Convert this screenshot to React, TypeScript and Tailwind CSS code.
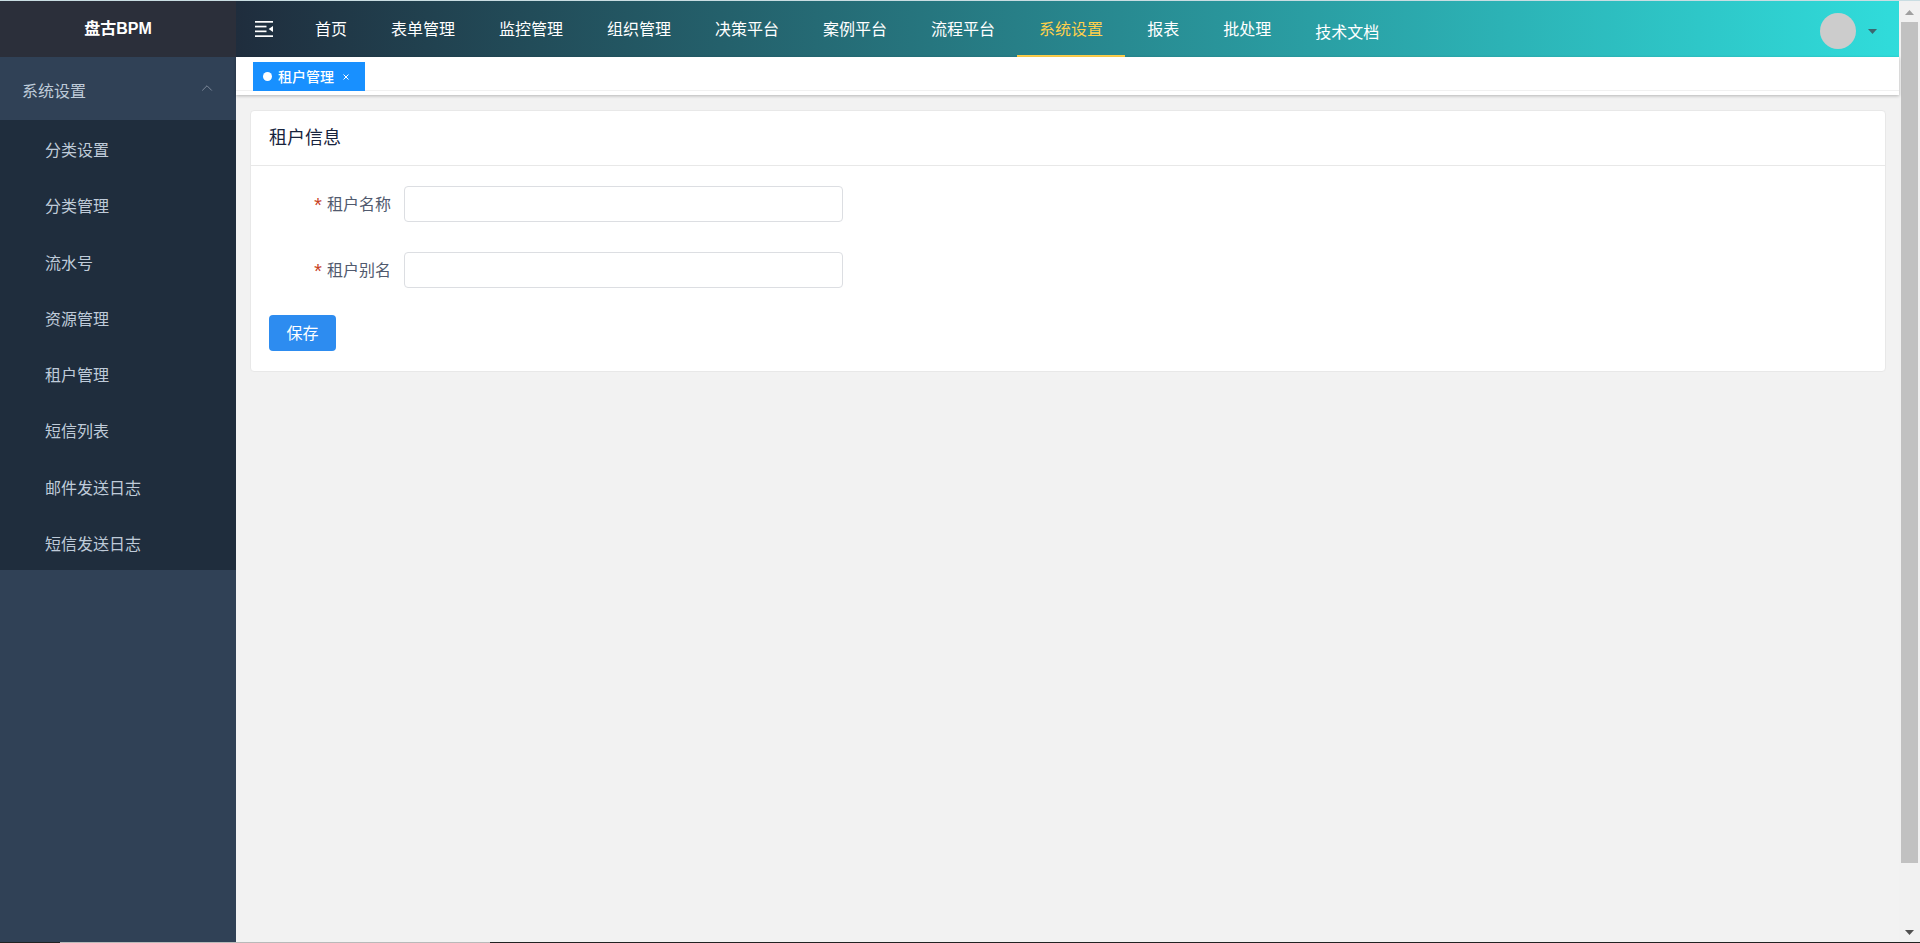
import { useState } from 'react';
import { ChevronUp } from 'lucide-react';

const navItems = ['首页', '表单管理', '监控管理', '组织管理', '决策平台', '案例平台', '流程平台', '系统设置', '报表', '批处理'];

const menuItems = ['分类设置', '分类管理', '流水号', '资源管理', '租户管理', '短信列表', '邮件发送日志', '短信发送日志'];

const fields = [
  { id: 'tenant-name', label: '租户名称' },
  { id: 'tenant-alias', label: '租户别名' },
];

function FoldIcon() {
  return (
    <svg width="18" height="16" viewBox="0 0 18 16" fill="#fff" aria-hidden="true">
      <rect x="0" y="0" width="18" height="1.7" />
      <rect x="0" y="4.7" width="11.5" height="1.7" />
      <rect x="0" y="9.5" width="11.5" height="1.7" />
      <rect x="0" y="14.3" width="18" height="1.7" />
      <path d="M18 5v6l-4.4-3z" />
    </svg>
  );
}

function Sidebar() {
  return (
    <aside className="w-[236px] shrink-0 bg-[#304156] flex flex-col">
      <h1 className="h-14 bg-[#2b2f3a] flex items-center justify-center text-base font-bold text-white">盘古BPM</h1>
      <button className="h-[63px] pl-[22px] pr-5 pt-1.5 flex items-center justify-between text-base text-[#bfcbd9]">
        系统设置
        <ChevronUp size={18} strokeWidth={1.2} className="text-[#8590a0] mb-2" />
      </button>
      <ul className="h-[450px] bg-[#1f2d3d] grid auto-rows-fr">
        {menuItems.map((item) => (
          <li key={item} className="flex">
            <a href="#" className="flex-1 flex items-center pl-[45px] pt-1.5 text-base text-[#bfcbd9]">{item}</a>
          </li>
        ))}
      </ul>
    </aside>
  );
}

function Header() {
  return (
    <header className="h-14 flex items-stretch bg-linear-to-r/srgb from-[#1f2d3d] to-[#30dcdb]">
      <button className="w-[57px] pl-[19px] flex items-center" aria-label="收起菜单">
        <FoldIcon />
      </button>
      <nav className="flex flex-1 text-base">
        {navItems.map((item) => (
          <a
            key={item}
            href="#"
            className={`px-[22px] pt-1 flex items-center border-b-2 ${item === '系统设置' ? 'text-[#ffd04b] border-[#ffd04b]' : 'text-white border-transparent'}`}
          >
            {item}
          </a>
        ))}
        <a href="#" className="px-[22px] pt-2 flex items-center text-white">技术文档</a>
      </nav>
      <button className="flex items-center gap-3 pt-1 pr-[22px]" aria-label="用户菜单">
        <span className="size-9 rounded-full bg-[#ccc]" />
        <svg width="9" height="5" viewBox="0 0 9 5" fill="#3c6770" aria-hidden="true">
          <path d="M0 0h9L4.5 5z" />
        </svg>
      </button>
    </header>
  );
}

function TagsBar() {
  return (
    <div className="relative bg-white pb-1 shadow-[0_1px_3px_rgba(0,0,0,0.25)]">
      <div className="h-[34px] pl-[17px] pt-[5px] border-b border-[#f0f0f0] flex">
        <div className="h-[29px] w-28 pl-[10px] bg-[#1890ff] text-white text-sm font-medium flex items-center">
          <span className="size-[9px] rounded-full bg-white mr-1.5" />
          租户管理
          <button className="ml-[9px]" aria-label="关闭">
            <svg width="6" height="6" viewBox="0 0 6 6" stroke="#fff" strokeWidth="1" aria-hidden="true">
              <path d="M.5 .5l5 5M5.5 .5l-5 5" />
            </svg>
          </button>
        </div>
      </div>
    </div>
  );
}

function TenantCard() {
  const [values, setValues] = useState<Record<string, string>>({});

  return (
    <section className="bg-white border border-[#e8e8e8] rounded">
      <h2 className="h-[55px] px-[18px] flex items-center border-b border-[#e8e8e8] text-lg text-[#17233d]">租户信息</h2>
      <form className="px-[18px] py-5" onSubmit={(e) => e.preventDefault()}>
        {fields.map(({ id, label }) => (
          <div key={id} className="flex items-center mb-[30px] last-of-type:mb-[27px]">
            <label htmlFor={id} className="w-[135px] pr-[13px] pt-0.5 flex items-center justify-end text-base text-[#515a6e]">
              <span className="mr-[3px] pt-1.5 font-['Liberation_Mono'] text-xl leading-5 text-[#c8421f]">*</span>
              {label}
            </label>
            <input
              id={id}
              type="text"
              value={values[id] ?? ''}
              onChange={(e) => setValues({ ...values, [id]: e.target.value })}
              className="w-[439px] h-9 px-2 border border-[#dcdee2] rounded outline-none focus:border-[#57a3f3]"
            />
          </div>
        ))}
        <button type="submit" className="h-9 w-[67px] pt-0.5 rounded bg-[#2d8cf0] text-base text-white">保存</button>
      </form>
    </section>
  );
}

function ScrollRail() {
  return (
    <div className="w-[21px] shrink-0 bg-[#f1f1f1] flex flex-col items-center justify-between pb-[7px]" aria-hidden="true">
      <div className="w-full flex flex-col items-center flex-1">
        <svg className="mt-[9px] mb-[7px] shrink-0" width="9" height="5" viewBox="0 0 9 5" fill="#a0a0a0">
          <path d="M0 5h9L4.5 0z" />
        </svg>
        <div className="w-[17px] h-[90.5%] bg-[#c1c1c1]" />
      </div>
      <svg width="9" height="5" viewBox="0 0 9 5" fill="#505050">
        <path d="M0 0h9L4.5 5z" />
      </svg>
    </div>
  );
}

export default function App() {
  return (
    <div className="min-h-screen flex flex-col bg-[#f2f2f2] border-t border-[#c9dde2] font-['Liberation_Sans','Noto_Sans_CJK_SC',sans-serif]">
      <div className="flex flex-1">
        <Sidebar />
        <div className="flex-1 min-w-0">
          <Header />
          <TagsBar />
          <main className="pt-[15px] pl-[14px] pr-[13px]">
            <TenantCard />
          </main>
        </div>
        <ScrollRail />
      </div>
      <div className="h-px bg-[#222] pl-[60px]">
        <div className="h-px w-[430px] bg-[#b9b9b9]" />
      </div>
    </div>
  );
}
